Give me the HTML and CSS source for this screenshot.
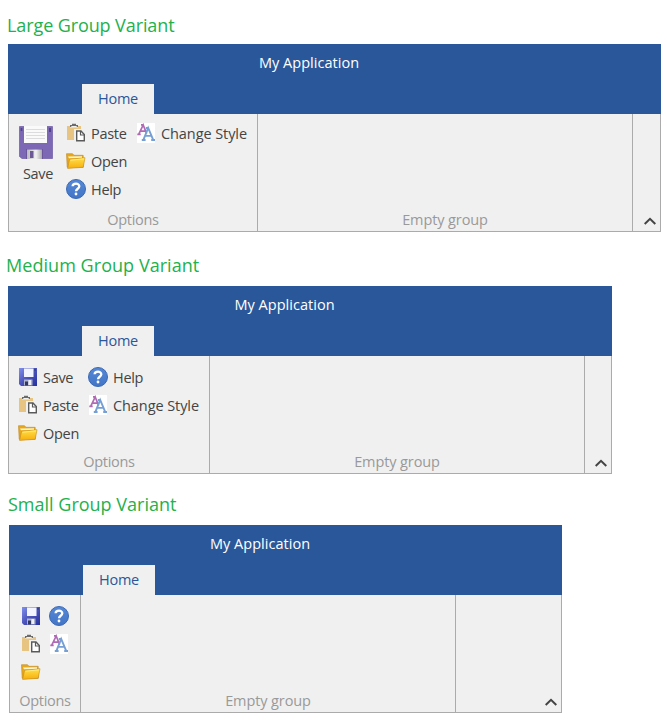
FILE: index.html
```
<!DOCTYPE html>
<html lang="en">
<head>
<meta charset="utf-8">
<title>Ribbon group variants</title>
<link rel="stylesheet" href="styles.css">
</head>
<body>
<svg class="defs" aria-hidden="true">
  <defs>
    <linearGradient id="folderFill" x1="0" y1="0" x2="0" y2="1"><stop offset="0" stop-color="#ffe04a"/><stop offset="1" stop-color="#f8ae0b"/></linearGradient>
    <linearGradient id="helpFill" x1="0" y1="0" x2="0" y2="1"><stop offset="0" stop-color="#5688d6"/><stop offset="1" stop-color="#4275c6"/></linearGradient>
    <linearGradient id="diskFill" x1="0" y1="0" x2="1" y2="1"><stop offset="0" stop-color="#8090ee"/><stop offset=".5" stop-color="#4c54ba"/><stop offset="1" stop-color="#26309e"/></linearGradient>
    <linearGradient id="metal" x1="0" y1="0" x2="1" y2="0"><stop offset="0" stop-color="#b9b9bd"/><stop offset=".6" stop-color="#f1f1f3"/><stop offset="1" stop-color="#aaaaae"/></linearGradient>
    <symbol id="paste" viewBox="0 0 20 20">
      <path fill="#e8c482" d="M1 3h14v4H9v10H1z"/>
      <path fill="#f0f0f0" d="M4 2.5h8v2H4z"/>
      <path fill="#6b6b6b" d="M4 4V2h2V.8h4V2h2v2h-1.3V3H5.3v1z"/>
      <path fill="#f0f0f0" d="M8 6h7.5L20 10.5V20H8z"/>
      <path fill="#fff" stroke="#5a5a5a" stroke-width="1.4" d="M10.7 8h4.3l3.3 3.5v6.3h-7.6z"/>
      <path fill="none" stroke="#5a5a5a" stroke-width="1.2" d="M14.5 8v4h4"/>
    </symbol>
    <symbol id="open" viewBox="0 0 20 20">
      <path fill="#e9a71a" stroke="#b98a2a" stroke-width=".6" d="M.5 2.7h6l1.5 1.6h9.2v12H1.2z"/>
      <path fill="#fff5c5" d="M2 5.5l14-.2v2H3z"/>
      <path fill="url(#folderFill)" stroke="#c58c18" stroke-width=".6" d="M3.6 8.3l15.4-1.6-1.8 9.6L1.6 17.4z"/>
      <path fill="none" stroke="#fff08b" stroke-width=".8" d="M4.4 9.2l13.7-1.4"/>
    </symbol>
    <symbol id="help" viewBox="0 0 20 20">
      <circle cx="10" cy="10" r="9.5" fill="url(#helpFill)" stroke="#3b69b2"/>
      <path fill="none" stroke="#fff" stroke-width="2.3" d="M6.6 7.3C6.8 3.9 13.3 3.8 13.3 7.3c0 2.4-3.3 2.5-3.3 5"/>
      <circle cx="10" cy="15" r="1.4" fill="#fff"/>
    </symbol>
    <symbol id="style" viewBox="0 0 20 20">
      <path fill="#fff" d="M1 0h18v20H1z"/>
      <path fill="none" stroke="#b06ab4" stroke-width="1.7" d="M2.8 11.2L7.2 2l3.4 8.5M4.2 8.2h5.5M1.3 11.4h3.4M5 1.9h2.7"/>
      <path fill="none" stroke="#769fd4" stroke-width="1.9" d="M7.4 16.8L12.2 5l5 11.8M8.9 12.9h6.8M5.8 17h3.8M15.2 17H19M9.8 5h3.1"/>
    </symbol>
    <symbol id="disk" viewBox="0 0 20 20">
      <path fill="url(#diskFill)" d="M1 1h18v18H3l-2-2z"/>
      <path fill="#f2f5ff" d="M6 1.5h9.5V10H6z"/>
      <path fill="#303b78" d="M16.3 1.8h1.4v2h-1.4z"/>
      <path fill="#aeb4cc" d="M6 12.5h8.5v6H6z"/>
      <path fill="#303760" d="M7 14.5h3v4H7z"/>
      <path fill="#eef0f5" d="M10.5 13H13v5h-2.5z"/>
    </symbol>
    <symbol id="floppy" viewBox="0 0 34 34">
      <path fill="#7d68b6" stroke="#6d5aa5" stroke-width=".7" d="M.5 1.5h33v32H3l-2.5-2z"/>
      <path fill="#fafafa" d="M5 1h23v17H5z"/>
      <path stroke="#dcdcdf" d="M7 4.5h19M7 7.5h19M7 10.5h19M7 13.5h19"/>
      <path fill="#51428b" d="M30 3h2v4h-2zM1.7 3h1.6v3H1.7z"/>
      <path fill="#6b559b" d="M7 24h17v10H7z"/>
      <path fill="url(#metal)" d="M8 24.5h15V34H8z"/>
      <path fill="#6c5799" d="M11 26h3.5v7H11z"/>
    </symbol>
    <symbol id="chevron" viewBox="0 0 12 8"><path fill="none" stroke="#444" stroke-width="2" d="M.7 7L6 1.8 11.3 7"/></symbol>
  </defs>
</svg>

<section class="variant large">
  <h2>Large Group Variant</h2>
  <div class="ribbon">
    <header><div class="title">My Application</div><div class="tab">Home</div></header>
    <div class="body">
      <div class="group options">
        <div class="items">
          <div class="big"><svg><use href="#floppy"/></svg><span>Save</span></div>
          <div class="column">
            <div class="item"><svg><use href="#paste"/></svg><span>Paste</span></div>
            <div class="item"><svg><use href="#open"/></svg><span>Open</span></div>
            <div class="item"><svg><use href="#help"/></svg><span>Help</span></div>
          </div>
          <div class="column">
            <div class="item"><svg><use href="#style"/></svg><span class="wide">Change Style</span></div>
          </div>
        </div>
        <div class="caption">Options</div>
      </div>
      <div class="group empty"><div class="caption">Empty group</div></div>
      <div class="end"><svg><use href="#chevron"/></svg></div>
    </div>
  </div>
</section>

<section class="variant medium">
  <h2>Medium Group Variant</h2>
  <div class="ribbon">
    <header><div class="title">My Application</div><div class="tab">Home</div></header>
    <div class="body">
      <div class="group options">
        <div class="items">
          <div class="column">
            <div class="item"><svg><use href="#disk"/></svg><span>Save</span></div>
            <div class="item"><svg><use href="#paste"/></svg><span>Paste</span></div>
            <div class="item"><svg><use href="#open"/></svg><span>Open</span></div>
          </div>
          <div class="column">
            <div class="item"><svg><use href="#help"/></svg><span>Help</span></div>
            <div class="item"><svg><use href="#style"/></svg><span class="wide">Change Style</span></div>
          </div>
        </div>
        <div class="caption">Options</div>
      </div>
      <div class="group empty"><div class="caption">Empty group</div></div>
      <div class="end"><svg><use href="#chevron"/></svg></div>
    </div>
  </div>
</section>

<section class="variant small">
  <h2>Small Group Variant</h2>
  <div class="ribbon">
    <header><div class="title">My Application</div><div class="tab">Home</div></header>
    <div class="body">
      <div class="group options">
        <div class="items">
          <div class="column">
            <div class="item"><svg><use href="#disk"/></svg></div>
            <div class="item"><svg><use href="#paste"/></svg></div>
            <div class="item"><svg><use href="#open"/></svg></div>
          </div>
          <div class="column">
            <div class="item"><svg><use href="#help"/></svg></div>
            <div class="item"><svg><use href="#style"/></svg></div>
          </div>
        </div>
        <div class="caption">Options</div>
      </div>
      <div class="group empty"><div class="caption">Empty group</div></div>
      <div class="end"><svg><use href="#chevron"/></svg></div>
    </div>
  </div>
</section>
</body>
</html>
```
FILE: styles.css
```
* { box-sizing: border-box; }
body {
  margin: 0;
  height: 720px;
  overflow: hidden;
  background: #fff;
  color: #444;
  font: 14.5px/20px "Open Sans", "Noto Sans", sans-serif;
  letter-spacing: -0.3px;
  white-space: nowrap;
}
svg { display: block; flex: none; }
.defs { width: 0; height: 0; position: absolute; }
h2 {
  margin: 0;
  height: 32px;
  color: #22b14c;
  font-size: 18px;
  font-weight: 400;
  line-height: 22px;
  letter-spacing: 0;
}
.large { padding: 14px 0 0 8px; height: 254px; }
.medium { padding: 0 0 0 8px; height: 239px; }
.small { padding: 0 0 0 9px; }
.large h2 { height: 30px; margin-left: -1px; letter-spacing: -0.1px; }
.medium h2 { margin-left: -2px; letter-spacing: 0.05px; }
.small h2 { margin-left: -1px; }
.large .ribbon { width: 653px; }
.medium .ribbon { width: 604px; }
.small .ribbon { width: 553px; }
.ribbon { height: 188px; }
header {
  height: 70px;
  background: #2a579a;
  display: flex;
  flex-direction: column;
}
.title { height: 40px; color: #fff; line-height: 38px; text-align: center; padding-right: 51px; letter-spacing: 0.03px; }
.tab {
  width: 72px;
  height: 30px;
  margin-left: 74px;
  background: #f0f0f0;
  color: #2a579a;
  line-height: 30px;
  text-align: center;
}
.body {
  display: flex;
  height: 118px;
  background: #f0f0f0;
  border: solid #ababab;
  border-width: 0 1px 1px;
}
.group {
  display: flex;
  flex-direction: column;
  justify-content: space-between;
  border-right: 1px solid #ababab;
}
.large .options { width: 249px; }
.medium .options { width: 201px; }
.small .options { width: 71px; }
.empty { width: 375px; justify-content: flex-end; }
.items { display: flex; padding: 7px 0 0 9px; }
.large .items { padding-top: 5px; }
.small .items { padding-left: 11px; }
.column { width: 70px; }
.small .column { width: 28px; }
.item { display: flex; align-items: center; gap: 5px; height: 28px; }
.item svg { width: 20px; height: 20px; }
.item span { padding-top: 2px; }
.item .wide { letter-spacing: -0.08px; }
.big { width: 48px; padding: 6px 8px 0 0; }
.big svg { width: 34px; height: 34px; margin-left: 1px; }
.big span { display: block; margin-top: 5px; text-align: center; }
.caption { height: 22px; line-height: 21px; color: #999; text-align: center; }
.empty .caption { letter-spacing: -0.1px; }
.end { flex: 1; display: flex; justify-content: flex-end; align-items: flex-end; padding: 0 4px 6px 0; }
.end svg { width: 12px; height: 8px; }
```
